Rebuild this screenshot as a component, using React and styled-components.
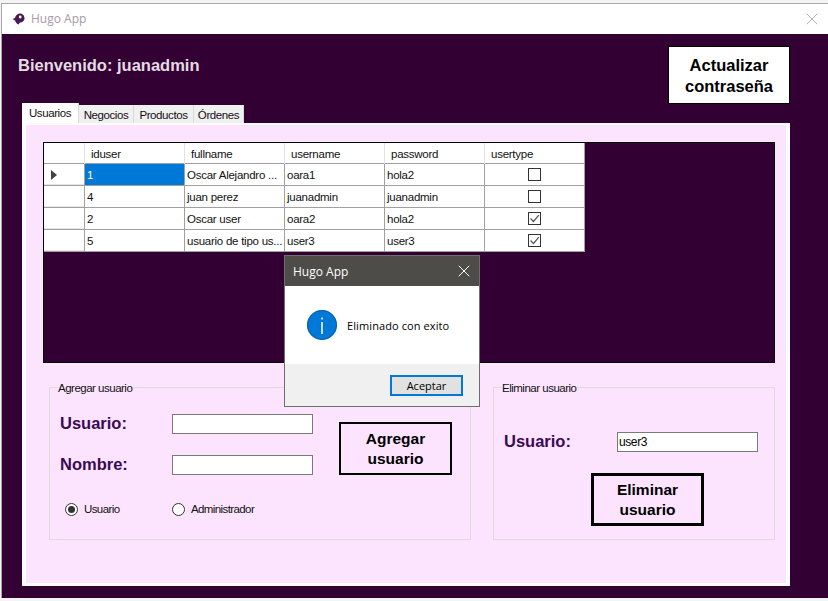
import React from "react";
import styled, { createGlobalStyle } from "styled-components";
import { X } from "lucide-react";

const GlobalStyle = createGlobalStyle`
  html, body {
    margin: 0;
    padding: 0;
    background: #f4f4f4;
    overflow: hidden;
  }
  #root {
    height: 601px;
  }
`;

const users = [
  { id: "1", name: "Oscar Alejandro ...", user: "oara1", pass: "hola2", admin: false, current: true },
  { id: "4", name: "juan perez", user: "juanadmin", pass: "juanadmin", admin: false },
  { id: "2", name: "Oscar user", user: "oara2", pass: "hola2", admin: true },
  { id: "5", name: "usuario de tipo us...", user: "user3", pass: "user3", admin: true },
];

const tabs = ["Usuarios", "Negocios", "Productos", "Órdenes"];
const columns = ["iduser", "fullname", "username", "password", "usertype"];

const Page = styled.div`
  position: relative;
  width: 828px;
  height: 601px;
  padding: 3px 0 0 1px;
  box-sizing: border-box;
`;

const Window = styled.div`
  width: 827px;
  height: 595px;
  box-sizing: border-box;
  border: 1px solid #a8a8a8;
  border-bottom: none;
  border-right: none;
  display: flex;
  flex-direction: column;
`;

const TitleBar = styled.div`
  height: 30px;
  flex: none;
  box-sizing: border-box;
  background: #fff;
  display: flex;
  align-items: center;
  padding: 0 6px 0 10px;
  gap: 6px;
  font: 12px "Open Sans", sans-serif;
  color: #a59aa5;
`;

const TitleText = styled.span`
  flex: 1;
  padding-bottom: 2px;
`;

const Content = styled.div`
  flex: 1;
  background: #330033;
  padding: 0 37px 11px 20px;
`;

const Header = styled.div`
  height: 69px;
  margin-left: -4px;
  display: flex;
  justify-content: space-between;
  align-items: flex-start;
  padding-top: 12px;
  box-sizing: border-box;
`;

const Welcome = styled.h1`
  margin: 10px 0 0;
  font: bold 16.5px "Liberation Sans", Arial, sans-serif;
  color: #e2dce2;
`;

const UpdateButton = styled.button`
  width: 122px;
  height: 58px;
  margin-right: 1px;
  background: #fff;
  border: 1px solid #000;
  padding: 2px 14px 0;
  font: bold 16.5px/21px "Liberation Sans", Arial, sans-serif;
  color: #000;
`;

const TabStrip = styled.div`
  display: flex;
  align-items: flex-end;
  height: 20px;
`;

const Tab = styled.div`
  box-sizing: border-box;
  width: ${(p) => p.$width}px;
  height: ${(p) => (p.$active ? 20 : 18)}px;
  background: ${(p) => (p.$active ? "#fff" : "#f0f0f0")};
  border-right: 1px solid #d9d9d9;
  text-align: center;
  font: 11.5px/20px "Liberation Sans", Arial, sans-serif;
  letter-spacing: -0.4px;
  color: #111;
`;

const Panel = styled.div`
  width: 768px;
  height: 463px;
  box-sizing: border-box;
  background: #fde4fe;
  border: solid #fcfcfc;
  border-width: 2px 4px 3px;
  padding: 17px 11px 0 17px;
`;

const GridBox = styled.div`
  height: 221px;
  background: #330033;
  border: 1px solid #000;
  box-sizing: border-box;
`;

const Table = styled.div`
  width: 540px;
  background: #fff;
  border-right: 1px solid #a0a0a0;
  border-bottom: 1px solid #a0a0a0;
  font: 11.5px "Liberation Sans", Arial, sans-serif;
  letter-spacing: -0.25px;
  color: #111;
`;

const Row = styled.div`
  display: grid;
  grid-template-columns: 41px repeat(4, 100px) 99px;
  height: ${(p) => (p.$head ? 21 : 22)}px;
  box-sizing: border-box;
  border-bottom: 1px solid #a0a0a0;
  &:last-child {
    border-bottom: none;
    height: 21px;
  }
`;

const HeadCell = styled.div`
  border-right: 1px solid #e2e2e2;
  padding-left: 6px;
  line-height: 23px;
  &:last-child {
    border-right: none;
  }
`;

const RowHead = styled.div`
  border-right: 1px solid #a0a0a0;
  display: flex;
  align-items: center;
  padding-left: 7px;
  box-shadow: inset 0 -1px 0 #e6e6e6;
`;

const Arrow = styled.i`
  width: 0;
  height: 0;
  border-left: 6px solid #444;
  border-top: 5px solid transparent;
  border-bottom: 5px solid transparent;
`;

const Cell = styled.div`
  border-right: 1px solid #a0a0a0;
  padding-left: 2px;
  line-height: 22px;
  white-space: nowrap;
  overflow: hidden;
  background: ${(p) => (p.$selected ? "#0078d7" : "transparent")};
  color: ${(p) => (p.$selected ? "#fff" : "inherit")};
  &:last-child {
    border-right: none;
  }
`;

const CheckCell = styled.div`
  display: flex;
  align-items: center;
  justify-content: center;
`;

const CheckBox = styled.span`
  width: 13px;
  height: 13px;
  box-sizing: border-box;
  border: 1px solid #333;
  background: #fff;
  display: flex;
  align-items: center;
  justify-content: center;
`;

const Groups = styled.div`
  display: flex;
  gap: 22px;
  margin: 18px 0 0 6px;
`;

const Group = styled.fieldset`
  width: ${(p) => p.$width}px;
  height: 159px;
  box-sizing: border-box;
  margin: 0;
  padding: ${(p) => p.$top}px 0 0 10px;
  border: 1px solid #dcdcdc;
  display: ${(p) => (p.$row ? "flex" : "block")};
  align-items: flex-start;
`;

const Legend = styled.legend`
  position: relative;
  top: 1px;
  margin-left: -2px;
  padding: 0 1px 0 0;
  font: 11.5px/13px "Liberation Sans", Arial, sans-serif;
  letter-spacing: -0.5px;
  color: #111;
`;

const Field = styled.div`
  display: flex;
  align-items: center;
  height: 20px;
  margin-bottom: 21px;
`;

const Label = styled.label`
  width: ${(p) => p.$width}px;
  flex: none;
  padding-bottom: 2px;
  font: bold 16.5px "Liberation Sans", Arial, sans-serif;
  color: #3a0a55;
`;

const Input = styled.input`
  width: 141px;
  height: 20px;
  box-sizing: border-box;
  border: 1px solid #7a7a7a;
  background: #fff;
  padding: 0 1px;
  font: 12px "Liberation Sans", Arial, sans-serif;
  letter-spacing: -0.4px;
  color: #000;
  outline: none;
`;

const ActionButton = styled.button`
  width: 113px;
  height: 53px;
  flex: none;
  box-sizing: border-box;
  background: transparent;
  border: ${(p) => p.$border}px solid #000;
  margin: ${(p) => p.$margin};
  padding: 0 10px;
  font: bold 15.5px/20px "Liberation Sans", Arial, sans-serif;
  color: #000;
`;

const RadioRow = styled.div`
  display: flex;
  margin: 27px 0 0 5px;
  height: 14px;
  align-items: center;
`;

const RadioOption = styled.span`
  width: ${(p) => p.$width}px;
  display: flex;
  align-items: center;
  gap: 6px;
  font: 11.5px "Liberation Sans", Arial, sans-serif;
  letter-spacing: -0.6px;
  color: #111;
`;

const RadioDot = styled.i`
  width: 13px;
  height: 13px;
  box-sizing: border-box;
  border: 1px solid #333;
  border-radius: 50%;
  background: #fff;
  display: flex;
  align-items: center;
  justify-content: center;
  &::after {
    content: "";
    width: 7px;
    height: 7px;
    border-radius: 50%;
    background: ${(p) => (p.$on ? "#333" : "transparent")};
  }
`;

const Dialog = styled.div`
  position: absolute;
  left: 284px;
  top: 255px;
  width: 196px;
  height: 152px;
  box-sizing: border-box;
  border: 1px solid #6e6e6e;
  background: #fff;
  display: flex;
  flex-direction: column;
`;

const DialogTitle = styled.div`
  height: 30px;
  flex: none;
  background: #4d4c49;
  color: #fff;
  display: flex;
  align-items: center;
  justify-content: space-between;
  padding: 0 5px 0 8px;
  font: 12px "Open Sans", sans-serif;
`;

const DialogBody = styled.div`
  flex: 1;
  display: flex;
  align-items: center;
  gap: 10px;
  padding: 0 0 0 22px;
  font: 11px "Open Sans", sans-serif;
  letter-spacing: 0.1px;
  color: #000;
`;

const DialogFooter = styled.div`
  height: 42px;
  flex: none;
  background: #f0f0f0;
  display: flex;
  justify-content: flex-end;
  align-items: flex-start;
  padding: 11px 16px 0 0;
  box-sizing: border-box;
`;

const AcceptButton = styled.button`
  width: 73px;
  height: 21px;
  box-sizing: border-box;
  background: #e1e1e1;
  border: 2px solid #0078d7;
  padding: 0;
  font: 11px "Open Sans", sans-serif;
  color: #000;
`;

const BirdLogo = () => (
  <svg width="13" height="12" viewBox="0 0 13 12">
    <path
      d="M0.5 6 L3 5 C3.5 2 6 0.5 8 0.5 C11 0.5 12.5 3 12.5 5.5 C12.5 8 10 9.5 8 9.5 L6.5 11.5 C5 11 3.5 9 3 7.5 Z"
      fill="#4a1a55"
    />
    <circle cx="8.2" cy="4" r="1.4" fill="#fff" />
  </svg>
);

const InfoIcon = () => (
  <svg width="30" height="30" viewBox="0 0 30 30">
    <circle cx="15" cy="15" r="15" fill="#0078d7" />
    <circle cx="15" cy="15" r="14.5" fill="none" stroke="#0b5ea8" />
    <rect x="14.25" y="12" width="1.5" height="12" fill="#fff" />
    <rect x="14.25" y="7.5" width="1.5" height="2" fill="#fff" />
  </svg>
);

const CheckMark = () => (
  <svg width="11" height="11" viewBox="0 0 11 11">
    <path d="M1.5 5.5 L4.5 8.5 L9.8 2.2" fill="none" stroke="#555" strokeWidth="1.2" />
  </svg>
);

const tabWidths = [57, 55, 60, 50];

const App = () => {
  return (
    <Page>
      <GlobalStyle />
      <Window>
        <TitleBar>
          <BirdLogo />
          <TitleText>Hugo App</TitleText>
          <X size={20} strokeWidth={0.8} color="#888" />
        </TitleBar>
        <Content>
          <Header>
            <Welcome>Bienvenido: juanadmin</Welcome>
            <UpdateButton>Actualizar contraseña</UpdateButton>
          </Header>
          <TabStrip>
            {tabs.map((tab, index) => (
              <Tab key={tab} $active={index === 0} $width={tabWidths[index]}>
                {tab}
              </Tab>
            ))}
          </TabStrip>
          <Panel>
            <GridBox>
              <Table>
                <Row $head>
                  <HeadCell />
                  {columns.map((col) => (
                    <HeadCell key={col}>{col}</HeadCell>
                  ))}
                </Row>
                {users.map((u) => (
                  <Row key={u.id}>
                    <RowHead>{u.current ? <Arrow /> : null}</RowHead>
                    <Cell $selected={u.current}>{u.id}</Cell>
                    <Cell>{u.name}</Cell>
                    <Cell>{u.user}</Cell>
                    <Cell>{u.pass}</Cell>
                    <CheckCell>
                      <CheckBox>{u.admin ? <CheckMark /> : null}</CheckBox>
                    </CheckCell>
                  </Row>
                ))}
              </Table>
            </GridBox>
            <Groups>
              <Group $width={422} $top={20} $row>
                <Legend>Agregar usuario</Legend>
                <div>
                  <Field>
                    <Label $width={112}>Usuario:</Label>
                    <Input />
                  </Field>
                  <Field>
                    <Label $width={112}>Nombre:</Label>
                    <Input />
                  </Field>
                  <RadioRow>
                    <RadioOption $width={107}>
                      <RadioDot $on />
                      Usuario
                    </RadioOption>
                    <RadioOption $width={110}>
                      <RadioDot />
                      Administrador
                    </RadioOption>
                  </RadioRow>
                </div>
                <ActionButton $border={2} $margin="8px 0 0 26px">
                  Agregar usuario
                </ActionButton>
              </Group>
              <Group $width={282} $top={38}>
                <Legend>Eliminar usuario</Legend>
                <Field>
                  <Label $width={113}>Usuario:</Label>
                  <Input defaultValue="user3" />
                </Field>
                <ActionButton $border={3} $margin="0 0 0 87px">
                  Eliminar usuario
                </ActionButton>
              </Group>
            </Groups>
          </Panel>
        </Content>
      </Window>
      <Dialog>
        <DialogTitle>
          Hugo App
          <X size={20} strokeWidth={1.2} color="#fff" />
        </DialogTitle>
        <DialogBody>
          <InfoIcon />
          Eliminado con exito
        </DialogBody>
        <DialogFooter>
          <AcceptButton>Aceptar</AcceptButton>
        </DialogFooter>
      </Dialog>
    </Page>
  );
};

export default App;
